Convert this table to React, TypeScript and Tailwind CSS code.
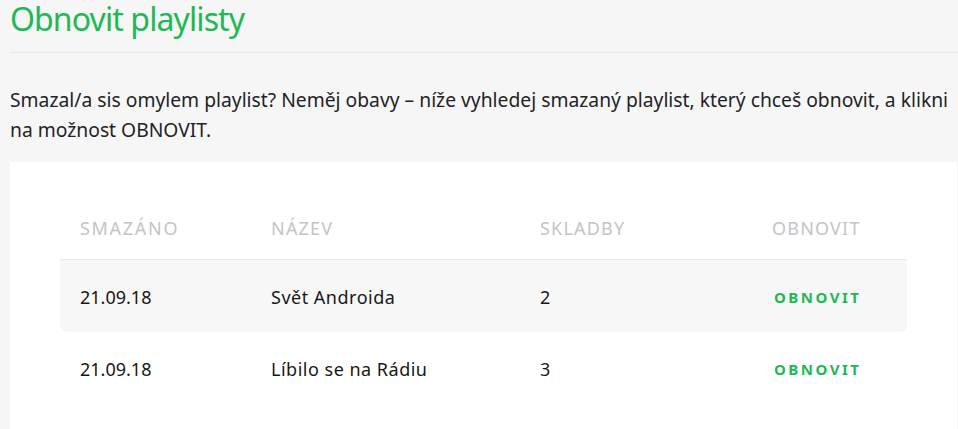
const rows = [
  { date: "21.09.18", name: "Svět Androida", tracks: 2 },
  { date: "21.09.18", name: "Líbilo se na Rádiu", tracks: 3 },
];

export default function App() {
  return (
    <div className="h-[429px] w-[958px] overflow-hidden bg-[#f6f6f6] pl-[10px] font-['Noto_Sans',sans-serif]">
      <h1 className="pt-[1px] text-[32px] leading-[36px] tracking-[-0.9px] text-[#1db954]">Obnovit playlisty</h1>
      <div className="mt-[15px] h-px bg-[#e6e6e6]" />

      <p className="mt-[32px] whitespace-nowrap text-[19.3px] leading-[30px] text-[#222326]">
        Smazal/a sis omylem playlist? Neměj obavy – níže vyhledej smazaný playlist, který chceš obnovit, a klikni
        <br />
        na možnost OBNOVIT.
      </p>

      <div className="mt-[17px] mr-[1px] bg-white px-[50px] pt-[36px] pb-[30px]">
        <div className="grid h-[62px] grid-cols-[191px_269px_232px_1fr] items-center border-b border-[#e8e8ea] px-[20px] text-[18px] tracking-[1.2px] text-[#c4c4c6]">
          <span className="tracking-[1.7px]">SMAZÁNO</span>
          <span>NÁZEV</span>
          <span>SKLADBY</span>
          <span>OBNOVIT</span>
        </div>
        {rows.map((r, i) => (
          <div
            key={r.name}
            className={`grid h-[72px] grid-cols-[191px_269px_232px_1fr] items-center rounded-b-[6px] px-[20px] pt-[3px] text-[18px] text-[#181818] ${i === 0 ? "bg-[#f7f7f8]" : ""}`}
          >
            <span>{r.date}</span>
            <span className="tracking-[0.5px]">{r.name}</span>
            <span>{r.tracks}</span>
            <span className="pl-[2px] text-[15px] font-bold tracking-[2.5px] text-[#1db954]">OBNOVIT</span>
          </div>
        ))}
      </div>
    </div>
  );
}
